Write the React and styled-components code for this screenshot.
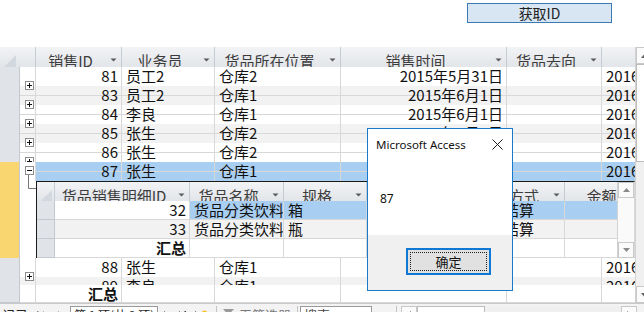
import React from "react"
import styled, { createGlobalStyle } from "styled-components"

// =============================================
// ===============   STYLES     ================
// =============================================

const MAIN_COLS = "20px 16px 86px 93px 126px 166px 95px 160px"
const SUB_COLS = "18px 135px 94px 83px 53px 50px 95px 90px"
const CJK = `"Noto Sans CJK SC", "Liberation Sans", sans-serif`

const GlobalStyle = createGlobalStyle`
  html, body {
    margin: 0;
    padding: 0;
    background: #fff;
  }
  body {
    font-family: ${CJK};
    color: #111;
  }
  * {
    box-sizing: border-box;
  }
`

const Page = styled.div`
  width: 644px;
  height: 312px;
  overflow: hidden;
  position: relative;
  background: #fff;
`

const TopBar = styled.div`
  height: 47px;
  display: flex;
  justify-content: flex-end;
  align-items: flex-start;
  padding: 3px 32px 0 0;
`

const FetchButton = styled.button`
  width: 145px;
  height: 20px;
  padding: 0;
  border: 1px solid #3d7ab4;
  background: #d8e6f4;
  font-family: ${CJK};
  font-size: 14px;
  line-height: 18px;
  color: #222;
`

const Sheet = styled.div`
  width: 660px;
`

const SheetBody = styled.div`
  display: flex;
  height: 256px;
`

const Columns = styled.div`
  width: 635px;
  flex: none;
  display: flex;
  flex-direction: column;
  overflow: hidden;
`

const RowsViewport = styled.div`
  height: 218px;
  overflow: hidden;
`

const HeaderRow = styled.div`
  display: grid;
  grid-template-columns: ${(p) => p.$cols};
  height: ${(p) => p.$h || 20}px;
  background: linear-gradient(#f2f3f5, #e2e5e9);
`

const HeadCell = styled.div`
  grid-column: ${(p) => (p.$span ? `span ${p.$span}` : "auto")};
  display: flex;
  align-items: center;
  overflow: hidden;
  white-space: nowrap;
  border-right: 1px solid #c6ccd3;
  border-bottom: 1px solid #c6ccd3;
  font-size: 15px;
  color: #3c3c3c;
`

const HeadLabel = styled.span`
  flex: 1;
  min-width: 0;
  display: flex;
  justify-content: center;
`

const ArrowBox = styled.span`
  width: 16px;
  flex: none;
  display: flex;
  justify-content: center;
  align-items: center;
`

const CornerMark = styled.div`
  grid-column: ${(p) => (p.$span ? `span ${p.$span}` : "auto")};
  border-right: 1px solid #c6ccd3;
  border-bottom: 1px solid #c6ccd3;
  padding: ${(p) => p.$pad || "2px 0 0 3px"};
`

const Row = styled.div`
  display: grid;
  grid-template-columns: ${(p) => p.$cols};
  height: ${(p) => p.$h || 19}px;
  flex: none;
  background: ${(p) => (p.$selected ? "#a8cef2" : p.$alt ? "#f2f2f2" : "#fff")};
`

const Cell = styled.div`
  border-right: 1px solid #d8d8d8;
  border-bottom: 1px solid #d8d8d8;
  font-size: 15px;
  line-height: 18px;
  white-space: nowrap;
  overflow: hidden;
  text-align: ${(p) => p.$align || "left"};
  padding: ${(p) => (p.$align === "right" ? "0 3px 0 0" : "0 0 0 4px")};
  font-weight: ${(p) => (p.$bold ? 700 : 400)};
  background: ${(p) => p.$bg || "transparent"};
`

const Selector = styled.div`
  background: ${(p) => (p.$active ? "#f9d66f" : "#e0e4e9")};
  border-right: 1px solid #c4c9d0;
  border-bottom: 1px solid ${(p) => (p.$active ? "#f9d66f" : "#c4c9d0")};
`

const ExpandCell = styled.div`
  background: ${(p) => (p.$plain ? "#fff" : "transparent")};
  border-right: 1px solid #d8d8d8;
  border-bottom: 1px solid ${(p) => (p.$open ? "#fff" : "#d8d8d8")};
  padding: ${(p) => (p.$open ? "0" : "4px 0 0 5px")};
`

const SubRegion = styled.div`
  display: flex;
  height: 77px;
  flex: none;
`

const SubSelector = styled.div`
  width: 20px;
  background: #f9d66f;
  border-right: 1px solid #c4c9d0;
`

const TreeIndent = styled.div`
  width: 16px;
  background: #fff;
`

const SubSheet = styled.div`
  width: 599px;
  display: flex;
  border-left: 1px solid #1a1a1a;
  border-top: 1px solid #1a1a1a;
  border-right: 1px solid #d8d8d8;
`

const SubGrid = styled.div`
  width: 580px;
  overflow: hidden;
  display: flex;
  flex-direction: column;
`

const VScroll = styled.div`
  width: 17px;
  flex: none;
  display: flex;
  flex-direction: column;
  background: ${(p) => p.$track || "#f0f0f0"};
  border-left: 1px solid #d2d2d2;
`

const ScrollArrow = styled.div`
  height: ${(p) => p.$size || 17}px;
  width: ${(p) => (p.$horizontal ? "16px" : "auto")};
  flex: none;
  display: flex;
  align-items: center;
  justify-content: center;
  background: #fbfbfb;
  border: 1px solid #c9c9c9;
`

const Thumb = styled.div`
  flex: none;
  height: ${(p) => (p.$horizontal ? "auto" : `${p.$size}px`)};
  width: ${(p) => (p.$horizontal ? `${p.$size}px` : "auto")};
  background: #fff;
  border: 1px solid #bdbdbd;
`

const Track = styled.div`
  flex: 1;
`

const NavBar = styled.div`
  height: 22px;
  display: flex;
  align-items: center;
  background: #f3f3f3;
  border-top: 1px solid #c8c8c8;
  font-size: 13px;
  color: #222;
  white-space: nowrap;
`

const NavLabel = styled.span`
  width: 33px;
  flex: none;
  padding-left: 2px;
`

const NavBtn = styled.span`
  width: ${(p) => p.$w || 16}px;
  flex: none;
  display: inline-flex;
  justify-content: center;
  align-items: center;
`

const RecordBox = styled.span`
  width: 88px;
  height: 18px;
  flex: none;
  margin-left: 5px;
  border: 1px solid #9a9a9a;
  background: #fff;
  font-size: 12px;
  line-height: 16px;
  padding-left: 3px;
`

const Divider = styled.span`
  width: 1px;
  height: 18px;
  flex: none;
  background: #c4c4c4;
  margin: 0 ${(p) => p.$r || 4}px 0 ${(p) => p.$l || 4}px;
`

const FilterText = styled.span`
  width: 52px;
  flex: none;
  margin-left: 4px;
  color: #7a7a7a;
`

const SearchBox = styled.span`
  width: 72px;
  height: 18px;
  flex: none;
  border: 1px solid #9a9a9a;
  background: #fff;
  line-height: 16px;
  padding-left: 3px;
  color: #444;
`

const HScroll = styled.div`
  width: 236px;
  height: 17px;
  flex: none;
  display: flex;
  background: #f0f0f0;
`

const Dialog = styled.div`
  position: absolute;
  left: 367px;
  top: 128px;
  width: 146px;
  height: 163px;
  border: 1px solid #1979ca;
  background: #fff;
  display: flex;
  flex-direction: column;
`

const DialogTitle = styled.div`
  height: 31px;
  display: flex;
  align-items: center;
  justify-content: space-between;
  padding: 0 9px 0 8px;
  font-family: "Noto Sans", "Liberation Sans", sans-serif;
  font-size: 11.5px;
  color: #111;
`

const DialogBody = styled.div`
  flex: 1;
  padding: 30px 0 0 12px;
  font-family: "Noto Sans", "Liberation Sans", sans-serif;
  font-size: 12px;
  color: #111;
`

const DialogFooter = styled.div`
  height: 55px;
  background: #f0f0f0;
  padding: 13px 0 0 38px;
`

const OkButton = styled.button`
  width: 85px;
  height: 27px;
  padding: 2px;
  border: 2px solid #0f78d4;
  background: #e1e1e1;
  font-family: ${CJK};
  font-size: 13px;
  color: #111;

  span {
    display: block;
    height: 100%;
    line-height: 17px;
    border: 1px dotted #222;
  }
`

// =============================================
// ===============   DATA       ================
// =============================================

const topRows = [
  { id: 81, emp: "员工2", loc: "仓库2", date: "2015年5月31日" },
  { id: 83, emp: "员工2", loc: "仓库1", date: "2015年6月1日" },
  { id: 84, emp: "李良", loc: "仓库1", date: "2015年6月1日" },
  { id: 85, emp: "张生", loc: "仓库2", date: "2015年6月1日" },
  { id: 86, emp: "张生", loc: "仓库2", date: "2015年6月2日" },
  { id: 87, emp: "张生", loc: "仓库1", date: "2015年6月2日", open: true },
]

const bottomRows = [
  { id: 88, emp: "张生", loc: "仓库1", date: "2015年6月3日" },
  { id: 89, emp: "李良", loc: "仓库1", date: "2015年6月3日" },
]

const subRows = [
  { id: 32, name: "货品分类饮料", spec: "箱", price: "", qty: "", pay: "货到结算" },
  { id: 33, name: "货品分类饮料", spec: "瓶", price: "", qty: "", pay: "货到结算" },
]

// =============================================
// ===============   ICONS      ================
// =============================================

const DropArrow = () => (
  <ArrowBox>
    <svg width="7" height="4" viewBox="0 0 7 4">
      <path d="M0.5 0.5h6L3.5 3.5z" fill="#5a5a5a" />
    </svg>
  </ArrowBox>
)

const CornerGlyph = () => (
  <svg width="14" height="14" viewBox="0 0 14 14">
    <path d="M1 13L13 1v12z" fill="#d3d8de" />
  </svg>
)

const ExpandIcon = ({ open }) => (
  <svg width="9" height="9" viewBox="0 0 9 9">
    <rect x="0.5" y="0.5" width="8" height="8" fill="#fff" stroke="#8c8c8c" />
    <line x1="2" y1="4.5" x2="7" y2="4.5" stroke="#111" />
    {!open && <line x1="4.5" y1="2" x2="4.5" y2="7" stroke="#111" />}
  </svg>
)

const OpenExpand = () => (
  <svg width="15" height="19" viewBox="0 0 15 19">
    <rect x="5.5" y="4.5" width="8" height="8" fill="#fff" stroke="#8c8c8c" />
    <line x1="7" y1="8.5" x2="12" y2="8.5" stroke="#111" />
    <line x1="8.5" y1="13" x2="8.5" y2="19" stroke="#777" />
  </svg>
)

const TreeLine = () => (
  <svg width="16" height="77" viewBox="0 0 16 77">
    <path d="M8.5 0v7.5H16" fill="none" stroke="#777" />
  </svg>
)

const Tri = ({ dir = "down", color = "#606060" }) => {
  const d = {
    down: "M0 0h7L3.5 4z",
    up: "M0 4h7L3.5 0z",
    left: "M4 0v7L0 3.5z",
    right: "M0 0v7L4 3.5z",
  }[dir]
  const vertical = dir === "up" || dir === "down"
  return (
    <svg width={vertical ? 7 : 4} height={vertical ? 4 : 7} viewBox={vertical ? "0 0 7 4" : "0 0 4 7"}>
      <path d={d} fill={color} />
    </svg>
  )
}

const FirstIcon = () => (
  <svg width="8" height="8" viewBox="0 0 8 8">
    <rect x="0" y="0" width="1.5" height="8" fill="#8a8a8a" />
    <path d="M7 0v8L2.5 4z" fill="#8a8a8a" />
  </svg>
)

const LastIcon = () => (
  <svg width="8" height="8" viewBox="0 0 8 8">
    <path d="M1 0v8L5.5 4z" fill="#3a3a3a" />
    <rect x="6.5" y="0" width="1.5" height="8" fill="#3a3a3a" />
  </svg>
)

const NewIcon = () => (
  <svg width="14" height="9" viewBox="0 0 14 9">
    <path d="M1 1v7L5.5 4.5z" fill="#3a3a3a" />
    <circle cx="10.5" cy="3.5" r="3" fill="#f3c423" />
  </svg>
)

const FunnelIcon = () => (
  <svg width="11" height="11" viewBox="0 0 11 11">
    <path d="M0 0h11L6.5 5v6L4.5 9.5V5z" fill="#9a9a9a" />
  </svg>
)

const CloseIcon = () => (
  <svg width="11" height="11" viewBox="0 0 11 11">
    <path d="M0.5 0.5l10 10M10.5 0.5l-10 10" stroke="#222" strokeWidth="1" />
  </svg>
)

// =============================================
// ===============   Component  ================
// =============================================

const MainRow = ({ row, alt }) => (
  <Row $cols={MAIN_COLS} $selected={row.open} $alt={alt}>
    <Selector $active={row.open} />
    {row.open ? (
      <ExpandCell $open $plain>
        <OpenExpand />
      </ExpandCell>
    ) : (
      <ExpandCell $plain={row.open}>
        <ExpandIcon />
      </ExpandCell>
    )}
    <Cell $align="right">{row.id}</Cell>
    <Cell>{row.emp}</Cell>
    <Cell>{row.loc}</Cell>
    <Cell $align="right">{row.date}</Cell>
    <Cell />
    <Cell>2016年6月1日</Cell>
  </Row>
)

const SubDatasheet = () => (
  <SubRegion>
    <SubSelector />
    <TreeIndent>
      <TreeLine />
    </TreeIndent>
    <SubSheet>
      <SubGrid>
        <HeaderRow $cols={SUB_COLS} $h={19}>
          <CornerMark $pad="2px 0 0 2px">
            <CornerGlyph />
          </CornerMark>
          {["货品销售明细ID", "货品名称", "规格", "单价", "数量", "结算方式", "金额"].map((h) => (
            <HeadCell key={h}>
              <HeadLabel>{h}</HeadLabel>
              <DropArrow />
            </HeadCell>
          ))}
        </HeaderRow>
        {subRows.map((r, i) => {
          const sel = i === 0
          return (
            <Row key={r.id} $cols={SUB_COLS} $selected={sel} $alt={i === 1}>
              <Selector />
              <Cell $align="right" $bg={sel ? "#fff" : undefined}>
                {r.id}
              </Cell>
              <Cell>{r.name}</Cell>
              <Cell>{r.spec}</Cell>
              <Cell $align="right">{r.price}</Cell>
              <Cell $align="right">{r.qty}</Cell>
              <Cell>{r.pay}</Cell>
              <Cell />
            </Row>
          )
        })}
        <Row $cols={SUB_COLS}>
          <Selector />
          <Cell $align="right" $bold>
            汇总
          </Cell>
          <Cell />
          <Cell />
          <Cell />
          <Cell />
          <Cell />
          <Cell />
        </Row>
      </SubGrid>
      <VScroll $track="#fafafa">
        <ScrollArrow $size={16}>
          <Tri dir="up" color="#8a8a8a" />
        </ScrollArrow>
        <Track />
        <ScrollArrow $size={16}>
          <Tri dir="down" color="#8a8a8a" />
        </ScrollArrow>
      </VScroll>
    </SubSheet>
  </SubRegion>
)

const App = () => (
  <Page>
    <GlobalStyle />
    <TopBar>
      <FetchButton>获取ID</FetchButton>
    </TopBar>
    <Sheet>
      <SheetBody>
        <Columns>
          <HeaderRow $cols={MAIN_COLS}>
            <CornerMark $span={2}>
              <CornerGlyph />
            </CornerMark>
            {["销售ID", "业务员", "货品所在位置", "销售时间", "货品去向", "付款时间"].map((h) => (
              <HeadCell key={h}>
                <HeadLabel>{h}</HeadLabel>
                <DropArrow />
              </HeadCell>
            ))}
          </HeaderRow>
          <RowsViewport>
            {topRows.map((r, i) => (
              <MainRow key={r.id} row={r} alt={i % 2 === 1} />
            ))}
            <SubDatasheet />
            {bottomRows.map((r, i) => (
              <MainRow key={r.id} row={r} alt={i % 2 === 1} />
            ))}
          </RowsViewport>
          <Row $cols={MAIN_COLS} $h={18}>
            <Selector />
            <ExpandCell $plain />
            <Cell $align="right" $bold>
              汇总
            </Cell>
            <Cell />
            <Cell />
            <Cell />
            <Cell />
            <Cell />
          </Row>
        </Columns>
        <VScroll>
          <ScrollArrow>
            <Tri dir="up" />
          </ScrollArrow>
          <Thumb $size={98} />
          <Track />
          <ScrollArrow>
            <Tri dir="down" />
          </ScrollArrow>
        </VScroll>
      </SheetBody>
      <NavBar>
        <NavLabel>记录:</NavLabel>
        <NavBtn>
          <FirstIcon />
        </NavBtn>
        <NavBtn>
          <Tri dir="left" color="#8a8a8a" />
        </NavBtn>
        <RecordBox>第 1 项(共 8 项)</RecordBox>
        <NavBtn>
          <Tri dir="right" color="#3a3a3a" />
        </NavBtn>
        <NavBtn>
          <LastIcon />
        </NavBtn>
        <NavBtn $w={22}>
          <NewIcon />
        </NavBtn>
        <Divider />
        <NavBtn $w={14}>
          <FunnelIcon />
        </NavBtn>
        <FilterText>无筛选器</FilterText>
        <Divider $l={6} $r={2} />
        <SearchBox>搜索</SearchBox>
        <Divider $l={24} $r={0} />
        <HScroll>
          <ScrollArrow $horizontal $size={17}>
            <Tri dir="left" />
          </ScrollArrow>
          <Thumb $horizontal $size={68} />
          <Track />
          <ScrollArrow $horizontal $size={17}>
            <Tri dir="right" />
          </ScrollArrow>
        </HScroll>
      </NavBar>
    </Sheet>
    <Dialog>
      <DialogTitle>
        <span>Microsoft Access</span>
        <CloseIcon />
      </DialogTitle>
      <DialogBody>87</DialogBody>
      <DialogFooter>
        <OkButton>
          <span>确定</span>
        </OkButton>
      </DialogFooter>
    </Dialog>
  </Page>
)

export default App
